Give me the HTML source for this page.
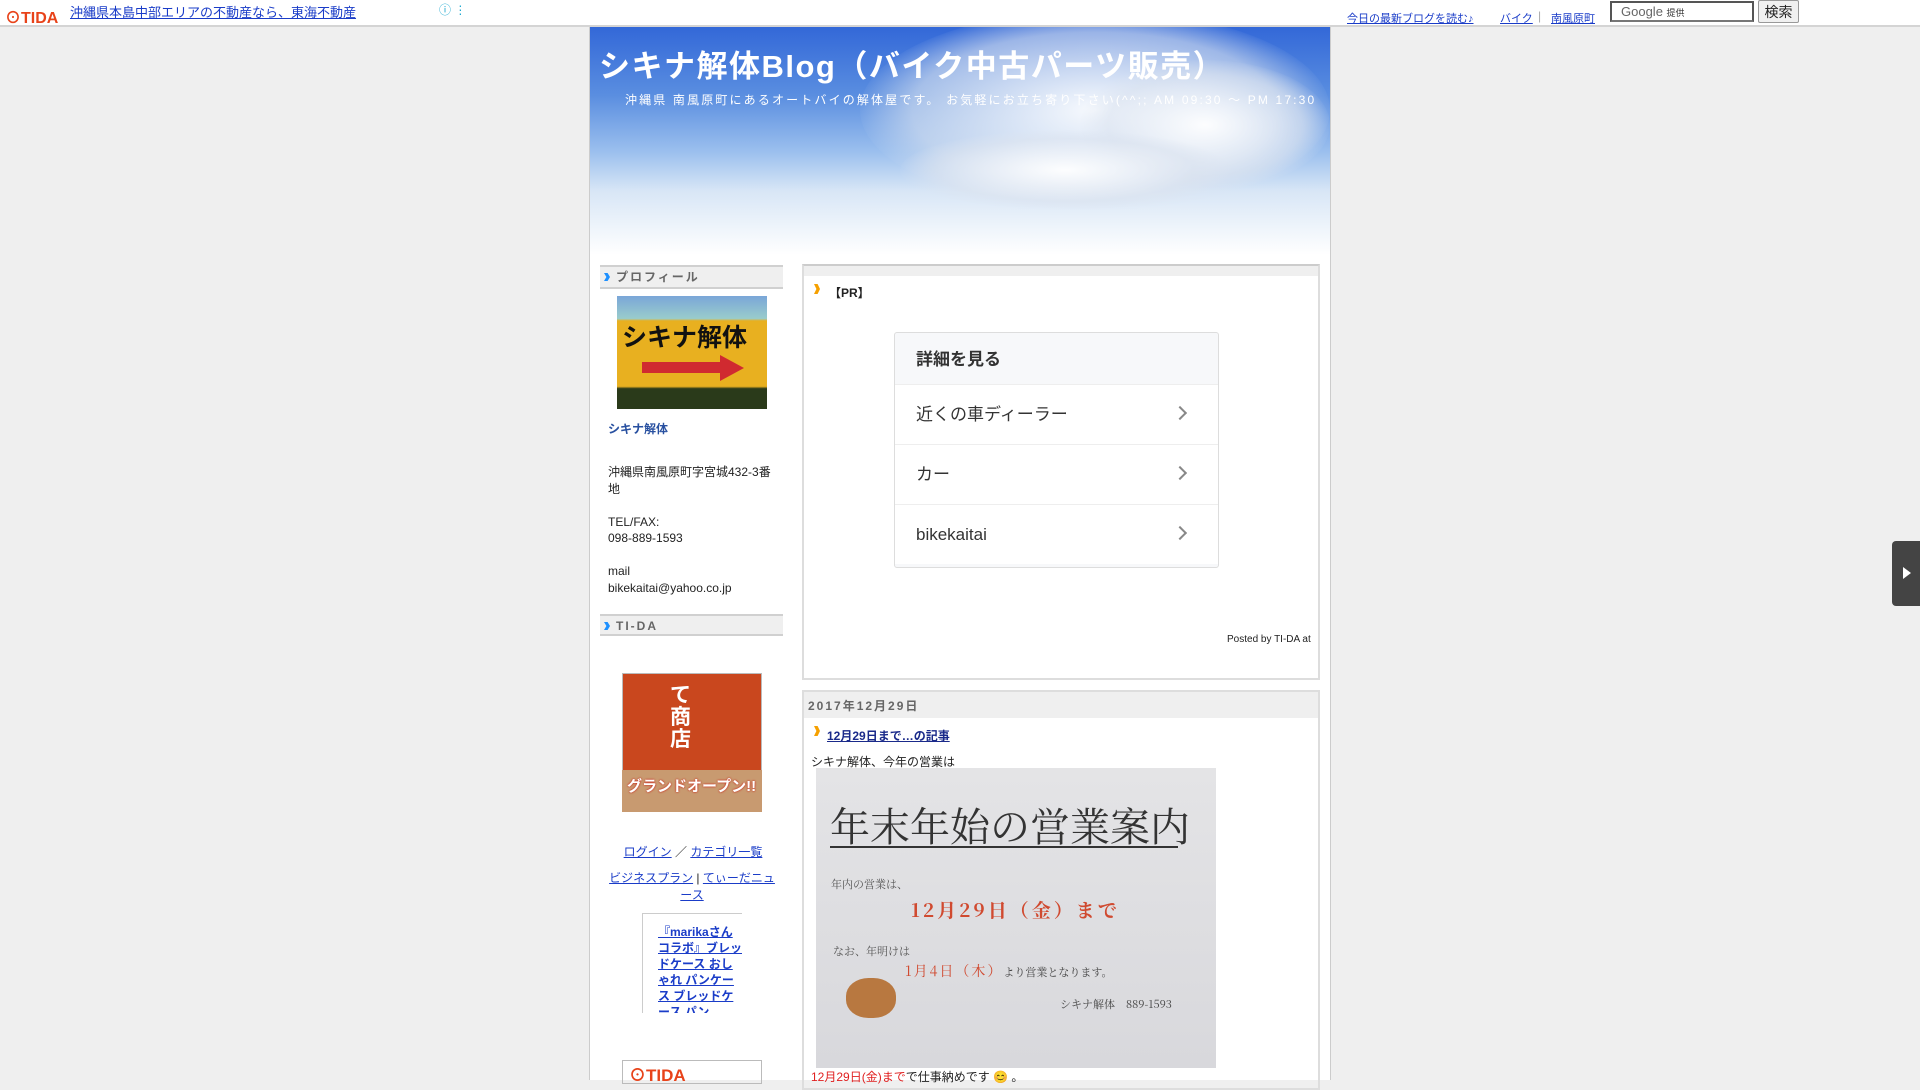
<!DOCTYPE html>
<html><head><meta charset="utf-8"><style>
*{margin:0;padding:0;box-sizing:border-box}
body{width:1920px;height:1080px;overflow:hidden;background:#efefef;font-family:"Liberation Sans","Noto Sans CJK JP",sans-serif;font-size:12px;color:#222;position:relative}
.a{position:absolute}
a{color:#1a3cc8;text-decoration:underline}
.top{left:0;top:0;width:1920px;height:27px;background:#fff;border-bottom:2px solid #d4d4d4}
.wrap{left:589px;top:27px;width:742px;height:1053px;background:#fff;border-left:1px solid #ccc;border-right:1px solid #ccc}
.hdr{left:590px;top:27px;width:740px;height:228px;overflow:hidden;background:linear-gradient(180deg,#3368d8 0%,#5a8ee0 30%,#9cc0ee 55%,#d8e6f6 72%,#fff 100%)}
.cloud{border-radius:50%;background:radial-gradient(ellipse,rgba(255,255,255,.95),rgba(220,228,240,.6) 55%,rgba(255,255,255,0) 72%)}
.h2{background:#efefef;border-top:2px solid #d0d0d0;border-bottom:2px solid #d0d0d0;font-weight:bold;color:#666;letter-spacing:2px;font-size:12px;padding-left:16px;line-height:20px}
.h2:before{content:"";position:absolute;left:4px;top:6px;width:6px;height:8px;background:#1e90ff;clip-path:polygon(0 0,60% 0,100% 50%,60% 100%,0 100%,40% 50%)}
.arrow{width:6px;height:10px;background:#f5a000;clip-path:polygon(0 0,60% 0,100% 50%,60% 100%,0 100%,40% 50%)}
.row{left:0;width:324px;height:60px;border-top:1px solid #eee;font-size:17px;color:#333;padding-left:21px;line-height:60px}
.chev{right:34px;top:23px;width:10px;height:10px;border-right:2px solid #888;border-top:2px solid #888;transform:rotate(45deg)}
</style></head><body>
<div class="a top"></div>
<div class="a" style="left:5px;top:4px;font-weight:bold;color:#e8431a;font-size:16px">⊙TIDA</div>
<a class="a" style="left:70px;top:2px;font-size:13px">沖縄県本島中部エリアの不動産なら、東海不動産</a>
<div class="a" style="left:439px;top:1px;color:#1fa9d0;font-size:12px">ⓘ ⋮</div>
<a class="a" style="left:1347px;top:10px;font-size:11px">今日の最新ブログを読む♪</a>
<a class="a" style="left:1500px;top:10px;font-size:11px">バイク</a><span class="a" style="left:1538px;top:9px;color:#aaa">|</span>
<a class="a" style="left:1551px;top:10px;font-size:11px">南風原町</a>
<div class="a" style="left:1610px;top:1px;width:144px;height:21px;border:2px solid #555;border-bottom-color:#777;background:#fff;font-size:13px;color:#666;padding-left:9px;line-height:17px">Google <span style="font-size:9px;color:#333">提供</span></div>
<div class="a" style="left:1758px;top:0;width:41px;height:23px;border:1px solid #999;border-radius:2px;background:#f0f0f0;font-size:14px;text-align:center;line-height:22px">検索</div>

<div class="a wrap"></div>
<div class="a hdr">
<div class="a cloud" style="left:270px;top:-17px;width:470px;height:200px"></div>
<div class="a cloud" style="left:490px;top:33px;width:250px;height:130px"></div>
<div class="a cloud" style="left:310px;top:103px;width:330px;height:80px"></div>
<div class="a" style="left:9px;top:14px;color:#fff;font-size:31px;font-weight:bold;letter-spacing:1.5px;white-space:nowrap">シキナ解体Blog（バイク中古パーツ販売）</div>
<div class="a" style="left:35px;top:64px;color:#fff;font-size:12px;letter-spacing:2.15px;white-space:nowrap">沖縄県 南風原町にあるオートバイの解体屋です。 お気軽にお立ち寄り下さい(^^;; AM 09:30 〜 PM 17:30</div>
</div>

<div class="a h2" style="left:600px;top:265px;width:183px;height:24px">プロフィール</div>
<div class="a" style="left:617px;top:296px;width:150px;height:113px;background:linear-gradient(180deg,#7aa6d8 0%,#9cc 20%,#e8b020 22%,#e8b020 80%,#2a3a1a 82%)"></div>
<div class="a" style="left:622px;top:318px;font-size:25px;font-weight:bold;color:#111">シキナ解体</div>
<div class="a" style="left:642px;top:362px;width:80px;height:11px;background:#d02a30"></div>
<div class="a" style="left:720px;top:355px;width:0;height:0;border-left:24px solid #d02a30;border-top:13px solid transparent;border-bottom:13px solid transparent"></div>
<div class="a" style="left:608px;top:420px;color:#2850a0;font-weight:bold;font-size:12px">シキナ解体</div>
<div class="a" style="left:608px;top:464px;width:170px;font-size:12px;line-height:16.5px">沖縄県南風原町字宮城432-3番地<br><br>TEL/FAX:<br>098-889-1593<br><br>mail<br>bikekaitai@yahoo.co.jp</div>
<div class="a h2" style="left:600px;top:614px;width:183px;height:22px">TI-DA</div>
<div class="a" style="left:622px;top:673px;width:140px;height:139px;background:#c9471e;border:1px solid #bbb"></div>
<div class="a" style="left:622px;top:770px;width:140px;height:42px;background:#c89a70"></div>
<div class="a" style="left:670px;top:685px;color:#fff;font-size:21px;font-weight:bold;line-height:22px;width:30px">て<br>商<br>店</div>
<div class="a" style="left:627px;top:775px;color:#fff;font-size:15px;font-weight:bold;text-shadow:0 0 2px #c00">グランドオープン!!</div>
<div class="a" style="left:621px;top:843px;width:144px;text-align:center;font-size:12px"><a>ログイン</a> ／ <a>カテゴリ一覧</a></div>
<div class="a" style="left:608px;top:870px;width:168px;text-align:center;font-size:12px;line-height:17px"><a>ビジネスプラン</a> | <a>てぃーだニュース</a></div>
<div class="a" style="left:642px;top:913px;width:100px;height:100px;border-left:1px solid #ccc;border-top:1px solid #ccc;overflow:hidden;padding:10px 0 0 15px;font-size:12px;font-weight:bold;line-height:16px;word-break:break-all"><a>『marikaさんコラボ』ブレッドケース おしゃれ パンケース ブレッドケース パン</a></div>
<div class="a" style="left:622px;top:1060px;width:140px;height:24px;border:1px solid #bbb;color:#e8431a;font-weight:bold;font-size:17px;padding-left:6px">⊙TIDA</div>

<div class="a" style="left:802px;top:264px;width:518px;height:416px;border:2px solid #ddd;border-top-color:#ccc"></div>
<div class="a" style="left:804px;top:266px;width:514px;height:10px;background:#efefef"></div>
<div class="a arrow" style="left:814px;top:284px"></div>
<div class="a" style="left:829px;top:284px;font-weight:bold;font-size:12px">【PR】</div>
<div class="a" style="left:894px;top:332px;width:325px;height:236px;border:1px solid #ddd;border-radius:3px;background:#f7f8fa;overflow:hidden">
<div class="a" style="left:21px;top:12px;font-size:17px;font-weight:bold;color:#333">詳細を見る</div>
<div class="a row" style="top:51px;background:#fff">近くの車ディーラー<div class="a chev"></div></div>
<div class="a row" style="top:111px;background:#fff">カー<div class="a chev"></div></div>
<div class="a row" style="top:171px;background:#fff">bikekaitai<div class="a chev"></div></div>
</div>
<div class="a" style="left:1227px;top:634px;font-size:10px">Posted by TI-DA at</div>

<div class="a" style="left:802px;top:690px;width:518px;height:400px;border:2px solid #ddd"></div>
<div class="a" style="left:804px;top:692px;width:514px;height:26px;background:#efefef;color:#666;font-weight:bold;letter-spacing:2px;font-size:12px;padding:5px 0 0 4px">2017年12月29日</div>
<div class="a arrow" style="left:814px;top:726px"></div>
<a class="a" style="left:827px;top:727px;font-weight:bold;font-size:12px;color:#1a2a8a">12月29日まで…の記事</a>
<div class="a" style="left:811px;top:753px;font-size:12px">シキナ解体、今年の営業は</div>
<div class="a" style="left:816px;top:768px;width:400px;height:300px;background:linear-gradient(180deg,#e4e4e6,#d8d8dc);font-family:'Noto Serif CJK SC',serif">
<div class="a" style="left:14px;top:28px;font-size:40px;color:#333">年末年始の営業案内</div>
<div class="a" style="left:14px;top:78px;width:348px;height:2px;background:#333"></div>
<div class="a" style="left:15px;top:108px;font-size:11px;color:#555">年内の営業は、</div>
<div class="a" style="left:95px;top:128px;font-size:19px;color:#d04a30;font-weight:bold;letter-spacing:3px">12月29日（金）まで</div>
<div class="a" style="left:17px;top:175px;font-size:11px;color:#555">なお、年明けは</div>
<div class="a" style="left:89px;top:193px;font-size:14px;color:#d04a30;letter-spacing:2px">1月4日（木）<span style="font-size:11px;color:#444;letter-spacing:0">より営業となります。</span></div>
<div class="a" style="left:244px;top:228px;font-size:11px;color:#444">シキナ解体　889-1593</div>
<div class="a" style="left:30px;top:210px;width:50px;height:40px;border-radius:45%;background:#b87840"></div>
</div>
<div class="a" style="left:811px;top:1068px;font-size:12px"><span style="color:#e02020">12月29日(金)まで</span>で仕事納めです 😊 。</div>

<div class="a" style="left:1892px;top:541px;width:28px;height:65px;background:#444;border-radius:4px 0 0 4px"></div>
<div class="a" style="left:1903px;top:567px;width:0;height:0;border-left:8px solid #fff;border-top:6px solid transparent;border-bottom:6px solid transparent"></div>
</body></html>
